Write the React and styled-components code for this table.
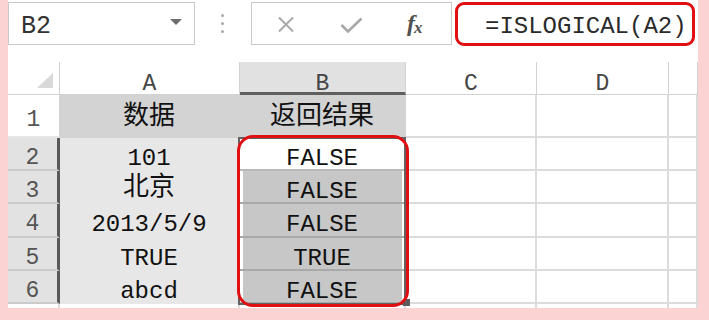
import React from "react";
import styled, { createGlobalStyle } from "styled-components";

const Global = createGlobalStyle`
  html, body { margin: 0; padding: 0; background: #fcd3d3; }
  body { font-family: "Liberation Mono", "Noto Sans CJK SC", monospace; }
`;

const MONO = `"Liberation Mono", "Noto Sans CJK SC", monospace`;

const Frame = styled.div`
  width: 709px;
  height: 320px;
  box-sizing: border-box;
  padding: 0 11px 12px 8px;
  background: #fcd3d3;
`;

const Sheet = styled.div`
  position: relative;
  height: 308px;
  background: #fff;
  display: flex;
  flex-direction: column;
  overflow: hidden;
`;

/* ---------- formula bar ---------- */

const Toolbar = styled.div`
  flex: 0 0 62px;
  box-sizing: border-box;
  padding-top: 2px;
  display: flex;
  align-items: flex-start;
`;

const NameBox = styled.div`
  width: 187px;
  height: 43px;
  box-sizing: border-box;
  border: 1px solid #c9c9c9;
  display: flex;
  align-items: flex-start;
  justify-content: space-between;
  padding: 11px 12px 0 12px;
  font-family: ${MONO};
  font-size: 25px;
  line-height: 1;
  color: #333;
`;

const DropArrow = styled.span`
  width: 0;
  height: 0;
  margin-top: 5px;
  border-left: 6px solid transparent;
  border-right: 6px solid transparent;
  border-top: 6px solid #6d6d6d;
`;

const Grip = styled.div`
  width: 56px;
  height: 43px;
  display: flex;
  flex-direction: column;
  align-items: center;
  justify-content: center;
  gap: 5px;
  padding-right: 1px;
  box-sizing: border-box;
`;

const GripDot = styled.span`
  width: 3px;
  height: 3px;
  border-radius: 50%;
  background: #a9a9a9;
`;

const ButtonBox = styled.div`
  width: 201px;
  height: 43px;
  box-sizing: border-box;
  border: 1px solid #c9c9c9;
  display: flex;
  align-items: center;
`;

const BarButton = styled.span`
  display: flex;
  align-items: center;
  margin-left: ${(p) => p.$gap}px;
  padding-top: 2px;
  color: #a8a8a8;
`;

const Fx = styled.span`
  margin-left: 44px;
  font-family: "Liberation Serif", serif;
  font-style: italic;
  font-weight: bold;
  font-size: 24px;
  color: #505050;
  letter-spacing: -1px;
  & sub {
    font-size: 17px;
    vertical-align: -2px;
  }
`;

const FormulaBox = styled.div`
  margin-left: 3px;
  width: 240px;
  height: 44px;
  box-sizing: border-box;
  border: 3px solid #e10f12;
  border-radius: 9px;
  display: flex;
  align-items: flex-start;
  padding: 10px 0 0 27px;
  font-family: ${MONO};
  font-size: 24px;
  line-height: 1;
  color: #2a2a2a;
  white-space: nowrap;
`;

/* ---------- grid ---------- */

const Grid = styled.div`
  display: grid;
  grid-template-columns: 52px 180px 166px 131px 132px 1fr;
  grid-template-rows: 33px 43px repeat(5, 33.2px) minmax(0, 1fr);
  flex: 1 1 0;
  min-height: 0;
`;

const Corner = styled.div`
  border-right: 1px solid #d2d2d2;
  border-bottom: 1px solid #d2d2d2;
  display: flex;
  align-items: flex-end;
  justify-content: flex-end;
  padding: 0 6px 6px 0;
`;

const ColHead = styled.div`
  box-sizing: border-box;
  background: ${(p) => (p.$active ? "#e1e1e1" : "#fff")};
  border-right: 1px solid #d2d2d2;
  border-bottom: ${(p) => (p.$active ? "3px solid #5f5f5f" : "1px solid #d2d2d2")};
  display: flex;
  align-items: flex-start;
  justify-content: center;
  padding-top: 11px;
  font-family: ${MONO};
  font-size: 23px;
  line-height: 1;
  color: #454545;
`;

const RowHead = styled.div`
  box-sizing: border-box;
  background: ${(p) => (p.$active ? "#e2e2e2" : "#fff")};
  border-right: ${(p) => (p.$active ? "3px solid #595959" : "1px solid #d2d2d2")};
  border-bottom: 2px solid ${(p) => (p.$active ? "#cbcbcb" : "#e6e6e6")};
  display: flex;
  align-items: flex-start;
  justify-content: center;
  padding-top: ${(p) => (p.$tall ? 14 : 9)}px;
  font-family: ${MONO};
  font-size: 23px;
  line-height: 1;
  color: #555;
`;

const tones = {
  head: { bg: "#d3d3d3", border: "transparent", right: "transparent" },
  soft: { bg: "#e7e7e7", border: "transparent", right: "transparent" },
  cur: { bg: "#fff", border: "#b9b9b9", right: "transparent" },
  sel: { bg: "#c7c7c7", border: "#a9a9a9", right: "transparent" },
  plain: { bg: "#fff", border: "#dcdcdc", right: "#dcdcdc" },
};

const Cell = styled.div`
  box-sizing: border-box;
  min-height: 0;
  background: ${(p) => tones[p.$tone].bg};
  border-bottom: 2px solid ${(p) => tones[p.$tone].border};
  border-right: 2px solid ${(p) => tones[p.$tone].right};
  box-shadow: ${(p) =>
    p.$tone === "sel" || p.$tone === "cur" ? "inset 3px 0 0 #fff, inset -2px 0 0 #fff" : "none"};
  display: flex;
  align-items: flex-start;
  justify-content: center;
  padding-top: ${(p) => (p.$cjk && !p.$tall ? 4 : 9)}px;
  font-family: ${MONO};
  font-size: ${(p) => (p.$cjk ? 26 : 24)}px;
  line-height: 1;
  color: #111;
  white-space: nowrap;
`;

const TailCell = styled.div`
  border-right: 2px solid #dcdcdc;
`;

/* ---------- overlays on the sheet ---------- */

const Selection = styled.div`
  position: absolute;
  left: 230px;
  top: 137px;
  width: 168px;
  height: 168px;
  box-sizing: border-box;
  border: 2px solid #626262;
  pointer-events: none;
`;

const FillHandle = styled.div`
  position: absolute;
  left: 395px;
  top: 299px;
  width: 7px;
  height: 7px;
  background: #5c5c5c;
`;

const Callout = styled.div`
  position: absolute;
  left: 229px;
  top: 135px;
  width: 172px;
  height: 172px;
  box-sizing: border-box;
  border: 3px solid #e10f12;
  border-radius: 16px;
  pointer-events: none;
`;

const columns = ["A", "B", "C", "D", ""];

const rows = [
  ["数据", "返回结果"],
  ["101", "FALSE"],
  ["北京", "FALSE"],
  ["2013/5/9", "FALSE"],
  ["TRUE", "TRUE"],
  ["abcd", "FALSE"],
];

const isHan = (s) => /[\u4e00-\u9fff]/.test(s);

function CrossIcon() {
  return (
    <svg width="18" height="17" viewBox="0 0 18 17">
      <path d="M2 1.5 L16 15.5 M16 1.5 L2 15.5" stroke="currentColor" strokeWidth="2" fill="none" />
    </svg>
  );
}

function CheckIcon() {
  return (
    <svg width="23" height="16" viewBox="0 0 23 16">
      <path d="M1.5 8 L8 14.5 L21.5 1.5" stroke="currentColor" strokeWidth="2.6" fill="none" />
    </svg>
  );
}

function SelectAll() {
  return (
    <svg width="16" height="15" viewBox="0 0 16 15">
      <path d="M16 0 L16 15 L0 15 Z" fill="#d8d8d8" />
    </svg>
  );
}

export default function App() {
  return (
    <>
      <Global />
      <Frame>
        <Sheet>
          <Toolbar>
            <NameBox>
              B2
              <DropArrow />
            </NameBox>
            <Grip>
              <GripDot />
              <GripDot />
              <GripDot />
            </Grip>
            <ButtonBox>
              <BarButton $gap={25}>
                <CrossIcon />
              </BarButton>
              <BarButton $gap={45}>
                <CheckIcon />
              </BarButton>
              <Fx>
                f<sub>x</sub>
              </Fx>
            </ButtonBox>
            <FormulaBox>=ISLOGICAL(A2)</FormulaBox>
          </Toolbar>

          <Grid>
            <Corner>
              <SelectAll />
            </Corner>
            {columns.map((c, i) => (
              <ColHead key={"h" + i} $active={c === "B"}>
                {c}
              </ColHead>
            ))}

            {rows.map(([a, b], r) => {
              const first = r === 0;
              const bTone = first ? "head" : r === 1 ? "cur" : "sel";
              return (
                <React.Fragment key={"r" + r}>
                  <RowHead $active={!first} $tall={first}>
                    {r + 1}
                  </RowHead>
                  <Cell $tone={first ? "head" : "soft"} $cjk={isHan(a)} $tall={first}>
                    {a}
                  </Cell>
                  <Cell $tone={bTone} $cjk={isHan(b)} $tall={first}>
                    {b}
                  </Cell>
                  <Cell $tone="plain" />
                  <Cell $tone="plain" />
                  <Cell $tone="plain" />
                </React.Fragment>
              );
            })}

            {columns.concat("").map((_, i) => (
              <TailCell key={"t" + i} />
            ))}
          </Grid>

          <Selection />
          <FillHandle />
          <Callout />
        </Sheet>
      </Frame>
    </>
  );
}
